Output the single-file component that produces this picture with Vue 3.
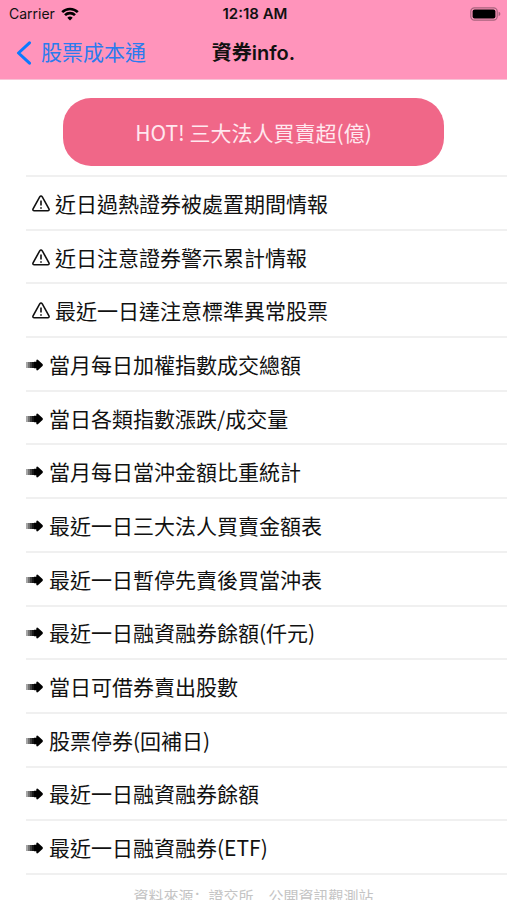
<script setup>
const items = [
  { icon: 'warning', label: '近日過熱證券被處置期間情報' },
  { icon: 'warning', label: '近日注意證券警示累計情報' },
  { icon: 'warning', label: '最近一日達注意標準異常股票' },
  { icon: 'arrow', label: '當月每日加權指數成交總額' },
  { icon: 'arrow', label: '當日各類指數漲跌/成交量' },
  { icon: 'arrow', label: '當月每日當沖金額比重統計' },
  { icon: 'arrow', label: '最近一日三大法人買賣金額表' },
  { icon: 'arrow', label: '最近一日暫停先賣後買當沖表' },
  { icon: 'arrow', label: '最近一日融資融券餘額(仟元)' },
  { icon: 'arrow', label: '當日可借券賣出股數' },
  { icon: 'arrow', label: '股票停券(回補日)' },
  { icon: 'arrow', label: '最近一日融資融券餘額' },
  { icon: 'arrow', label: '最近一日融資融券(ETF)' },
]
</script>

<template>
  <div class="screen" lang="zh-Hant">
    <header class="top">
      <div class="status">
        <div class="carrier">
          <span>Carrier</span>
          <svg class="wifi" viewBox="0 0 18 14" aria-hidden="true">
            <path d="M1.2 5.2a11 11 0 0 1 15.6 0" />
            <path d="M4 8.2a7 7 0 0 1 10 0" />
            <path class="dot" d="M9 13.6 6.3 10.8a3.9 3.9 0 0 1 5.4 0z" />
          </svg>
        </div>
        <time class="clock">12:18 AM</time>
        <svg class="battery" viewBox="0 0 31 14" aria-hidden="true">
          <rect class="shell" x="0.8" y="0.8" width="26.4" height="12.4" rx="3.6" />
          <rect x="2.6" y="2.6" width="22.8" height="8.8" rx="2" />
          <path class="tip" d="M28.6 4.8q1.8.6 1.8 2.2t-1.8 2.2z" />
        </svg>
      </div>
      <nav class="nav">
        <a class="back" href="#">
          <svg class="chevron" viewBox="0 0 16 24" aria-hidden="true">
            <path d="M13.5 1.8 2.5 12l11 10.2" />
          </svg>
          <span>股票成本通</span>
        </a>
        <h1 class="title">資券info.</h1>
      </nav>
    </header>

    <main class="content">
      <button class="hot" type="button">HOT! 三大法人買賣超(億)</button>
      <ul class="list">
        <li v-for="item in items" :key="item.label" class="item">
          <a class="link" href="#">
            <svg v-if="item.icon === 'warning'" class="icon warning" viewBox="0 0 18 18" aria-hidden="true">
              <path d="M7.7 1.9q1.3-1.9 2.6 0l6.500 11.600q1 2-1.200 2.200H2.400q-2.200-.2-1.200-2.200z" />
              <path d="M9 5.600v5M9 12.200v1.600" />
            </svg>
            <svg v-else class="icon arrow" viewBox="0 0 18 18" aria-hidden="true">
              <rect x="0" y="6" width="2" height="6" opacity="0.35" />
              <rect x="2" y="6" width="2" height="6" opacity="0.55" />
              <rect x="4" y="6" width="2" height="6" opacity="0.75" />
              <rect x="6" y="6" width="2" height="6" opacity="0.9" />
              <path d="M8 5.800h2.300V4.500q.4-1.500 1.800-.6l4.400 4.100q.9 1 0 2l-4.400 4.100q-1.400.9-1.800-.6V12.200H8z" />
            </svg>
            <span>{{ item.label }}</span>
          </a>
        </li>
      </ul>
    </main>

    <footer class="source" lang="zh-Hans">資料來源：證交所　公開資訊觀測站</footer>
  </div>
</template>

<style>
body {
  margin: 0;
  background: #fff;
}
</style>

<style scoped>
.screen {
  display: flex;
  flex-direction: column;
  height: 100vh;
  overflow: hidden;
  background: #fff;
  color: #111;
  font-family: Inter, "Noto Sans CJK TC", sans-serif;
}

.top {
  flex: none;
  background: #ff94bb;
  border-bottom: 1px solid #f8c4d7;
}

.status {
  display: grid;
  grid-template-columns: 1fr auto 1fr;
  align-items: center;
  height: 27px;
  padding: 0 6px 0 9px;
  font-size: 14px;
  line-height: 28px;
}

.carrier {
  display: flex;
  align-items: center;
  gap: 6px;
}

.wifi {
  width: 18px;
  height: 14px;
  fill: none;
  stroke: #000;
  stroke-width: 2.6;
}

.wifi .dot {
  fill: #000;
  stroke: none;
}

.clock {
  font-size: 15px;
  font-weight: 600;
}

.battery {
  width: 31px;
  height: 14px;
  justify-self: end;
}

.shell {
  fill: none;
  stroke: #a8637d;
  stroke-width: 1.2;
}

.tip {
  fill: #a8637d;
}

.nav {
  display: grid;
  grid-template-columns: 1fr auto 1fr;
  align-items: center;
  height: 52px;
  padding: 0 16px;
}

.back {
  display: flex;
  align-items: center;
  gap: 9px;
  color: #2b7bee;
  font-size: 21px;
  line-height: 30px;
  text-decoration: none;
}

.chevron {
  width: 16px;
  height: 24px;
  fill: none;
  stroke: #0a7aff;
  stroke-width: 3;
  stroke-linecap: round;
  stroke-linejoin: round;
}

.title {
  margin: 0;
  font-size: 20px;
  font-weight: 600;
  line-height: 30px;
}

.content {
  display: flex;
  flex: 1;
  flex-direction: column;
}

.hot {
  width: 75%;
  height: 68px;
  margin: 18px auto 9px;
  border: 0;
  border-radius: 28px;
  background: #f06788;
  color: #ffe8ef;
  font-family: "Noto Sans CJK TC", sans-serif;
  font-size: 21px;
}

.list {
  display: flex;
  flex: 1;
  flex-direction: column;
  margin: 0 0 0 26px;
  padding: 0;
  border-top: 2px solid #f0f0f0;
  list-style: none;
}

.item {
  display: flex;
  flex: 1;
  border-bottom: 2px solid #f0f0f0;
}

.link {
  display: flex;
  flex: 1;
  align-items: center;
  gap: 5px;
  color: #111;
  font-family: "Noto Sans CJK TC", sans-serif;
  font-size: 21px;
  line-height: 30px;
  text-decoration: none;
}

.icon {
  flex: none;
  width: 18px;
  height: 18px;
  margin-top: 2px;
}

.warning {
  margin-left: 6px;
  fill: none;
  stroke: #111;
  stroke-width: 1.6;
}

.source {
  flex: none;
  height: 25px;
  padding-top: 10px;
  box-sizing: border-box;
  color: #c4c4c4;
  font-family: "Noto Sans CJK SC", sans-serif;
  font-size: 15px;
  line-height: 22px;
  text-align: center;
}
</style>
